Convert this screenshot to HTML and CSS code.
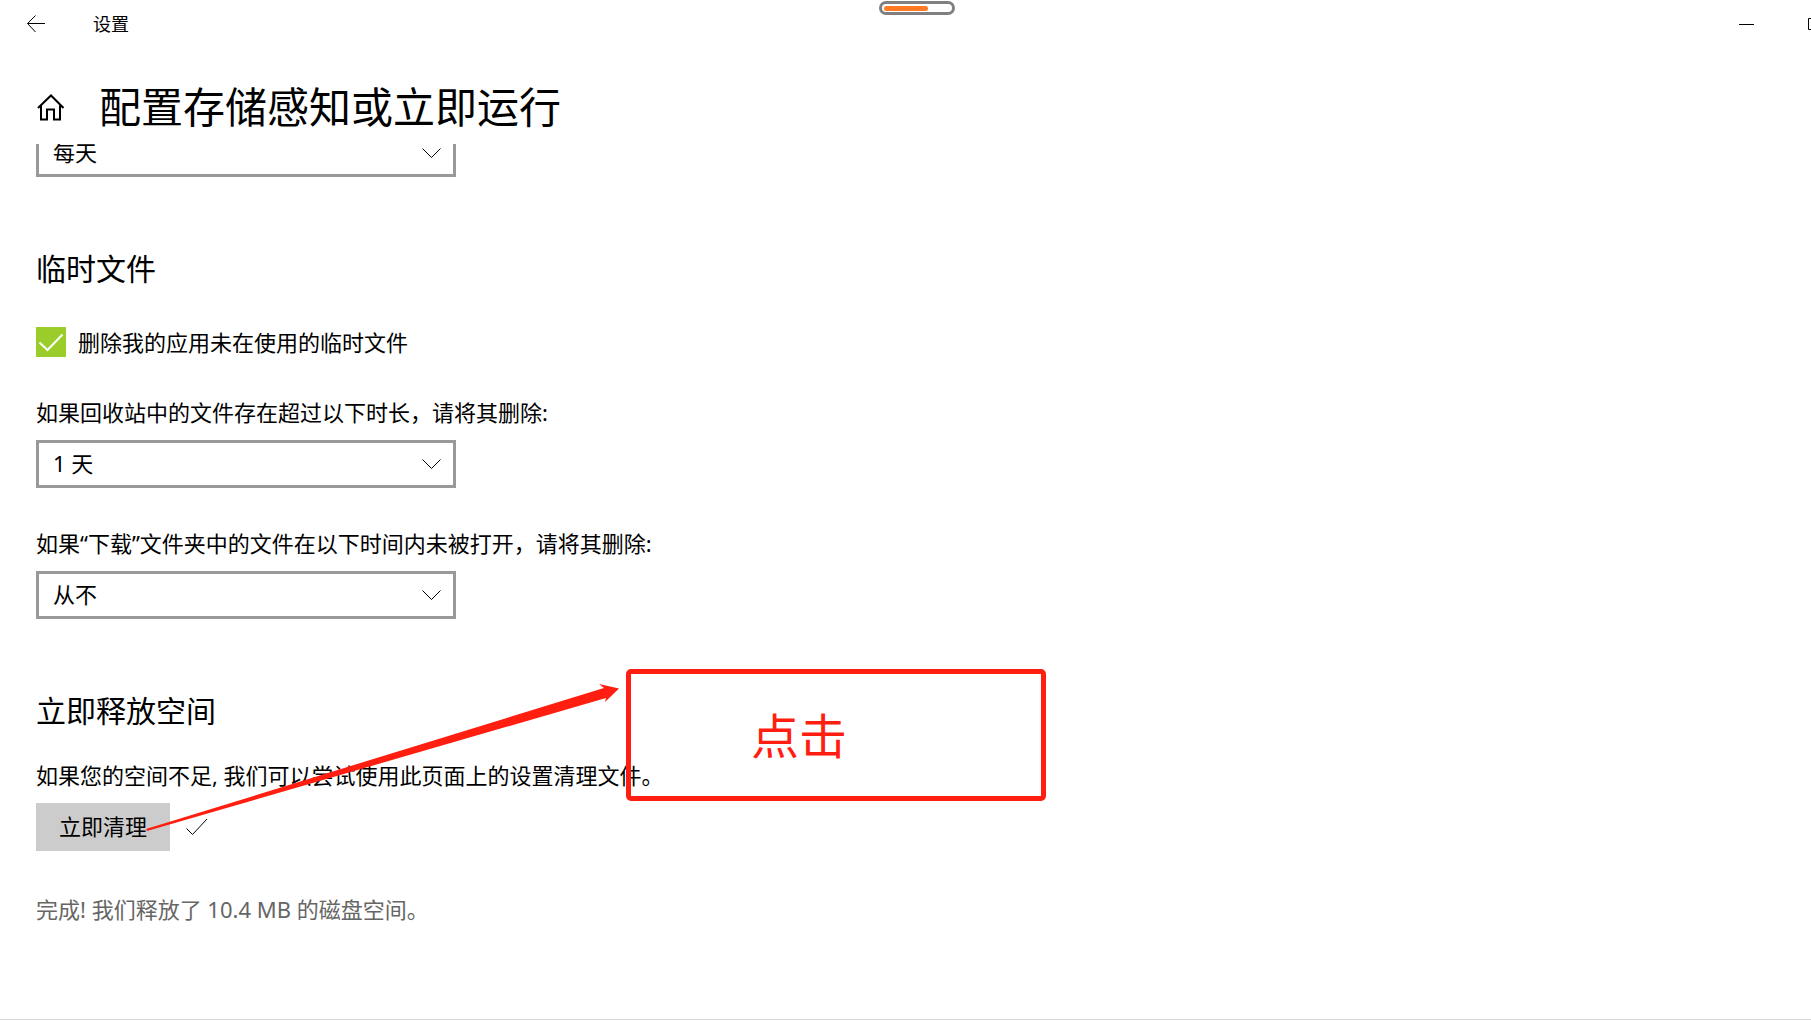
FILE: index.html
```html
<!DOCTYPE html>
<html lang="zh-CN">
<head>
    <meta charset="UTF-8">
    <meta name="viewport" content="width=device-width, initial-scale=1.0">
    <title>设置</title>
    <link rel="stylesheet" href="styles.css">
</head>
<body>
    <header class="titlebar">
        <button type="button" class="back" aria-label="返回">
            <svg width="20" height="18" viewBox="0 0 20 18"><path d="M1.500 8.500H19M9.500 .5L1.500 8.500l8 8.500"/></svg>
        </button>
        <span class="app-name">设置</span>
        <div class="window-buttons">
            <button type="button" aria-label="最小化">
                <svg width="15" height="12" viewBox="0 0 15 12"><path d="M0 6.500H15"/></svg>
            </button>
            <button type="button" aria-label="最大化">
                <svg width="15" height="12" viewBox="0 0 15 12"><path d="M.5 .5h14v11H.5z"/></svg>
            </button>
        </div>
    </header>
    <div class="battery"><div class="battery-level"></div></div>

    <div class="page-head">
        <a href="#" class="home" aria-label="主页">
            <svg width="28" height="27" viewBox="0 0 28 27"><path d="M2 14L15 1.500 27.500 14M5 11.500V25.500h6V15.500h7v10h6V11.500"/></svg>
        </a>
        <h1>配置存储感知或立即运行</h1>
    </div>

    <main class="content">
        <div class="select-box scrolled">
            <select aria-label="运行存储感知">
                <option>每天</option>
            </select>
            <svg class="chevron" width="19" height="11" viewBox="0 0 19 11"><path d="M.5 .5l9 9 9-9"/></svg>
        </div>

        <section>
            <h2>临时文件</h2>
            <label class="check">
                <input type="checkbox" checked>
                <svg class="tick" width="30" height="30" viewBox="0 0 30 30"><path d="M3.500 15.500l8 7.500L26.500 7.500"/></svg>
                删除我的应用未在使用的临时文件
            </label>
            <div class="field">
                <label for="recycle">如果回收站中的文件存在超过以下时长，请将其删除:</label>
                <div class="select-box">
                    <select id="recycle">
                        <option>1 天</option>
                    </select>
                    <svg class="chevron" width="19" height="11" viewBox="0 0 19 11"><path d="M.5 .5l9 9 9-9"/></svg>
                </div>
            </div>
            <div class="field">
                <label for="downloads">如果“下载”文件夹中的文件在以下时间内未被打开，请将其删除:</label>
                <div class="select-box">
                    <select id="downloads">
                        <option>从不</option>
                    </select>
                    <svg class="chevron" width="19" height="11" viewBox="0 0 19 11"><path d="M.5 .5l9 9 9-9"/></svg>
                </div>
            </div>
        </section>

        <section>
            <h2>立即释放空间</h2>
            <p class="hint">如果您的空间不足, 我们可以尝试使用此页面上的设置清理文件。</p>
            <div class="clean-row">
                <button type="button" class="clean">立即清理</button>
                <svg class="done-mark" width="22" height="18" viewBox="0 0 22 18"><path d="M.5 10.500l6 6L21 1"/></svg>
            </div>
            <p class="result">完成! 我们释放了 10.4 MB 的磁盘空间。</p>
        </section>
    </main>

    <!-- click annotation over the page -->
    <svg class="arrow" width="474" height="149" viewBox="0 0 474 149">
        <path d="M0 146L458 5 453 1 473 5.500 459 19 460 15 1 148z"/>
    </svg>
    <div class="callout">点击</div>
</body>
</html>
```
FILE: styles.css
```css
* {
    box-sizing: border-box;
}
body {
    position: relative;
    display: flex;
    flex-direction: column;
    min-height: 100vh;
    margin: 0;
    background: #fff;
    border-bottom: 1px solid #d9d9d9;
    color: #000;
    font-family: "Noto Sans", "Noto Sans CJK SC", sans-serif;
    font-size: 22px;
    line-height: 28px;
}
h1, h2, p {
    margin: 0;
    font-weight: 400;
}
button {
    padding: 0;
    border: none;
    background: none;
    color: inherit;
    font: inherit;
}
svg {
    display: block;
    fill: none;
    stroke: #000;
}
.titlebar {
    display: flex;
    align-items: center;
    height: 48px;
    overflow: hidden;
}
.back {
    display: flex;
    justify-content: center;
    width: 72px;
}
.app-name {
    margin-left: 21px;
    font-size: 18px;
}
.window-buttons {
    display: flex;
    margin-left: auto;
    margin-right: -39px;
}
.window-buttons button {
    display: flex;
    align-items: center;
    justify-content: center;
    width: 69px;
    height: 52px;
}
.battery {
    position: absolute;
    top: 1px;
    left: calc(50% - 27px);
    width: 76px;
    height: 14px;
    padding: 2px;
    border: 3px solid #808080;
    border-radius: 7px;
}
.battery-level {
    width: 44px;
    height: 5px;
    border-radius: 3px;
    background: #ff7a22;
}
.page-head {
    display: flex;
    align-items: center;
    gap: 35px;
    height: 96px;
    padding: 22px 36px 0;
}
.home svg {
    stroke-width: 2;
}
h1 {
    font-size: 42px;
    line-height: 56px;
}
.content {
    flex: 1;
    padding: 0 36px 32px;
    overflow: hidden;
}
/* the list is scrolled, so its first box is cut by the header */
.scrolled {
    margin-top: -15px;
}
.select-box {
    display: grid;
    align-items: center;
    width: 420px;
    max-width: 100%;
}
.select-box select,
.chevron {
    grid-area: 1 / 1;
}
.select-box select {
    width: 100%;
    height: 48px;
    padding: 0 48px 2px 14px;
    border: 3px solid #999;
    border-radius: 0;
    background: #fff;
    color: #000;
    font: inherit;
    appearance: none;
}
.chevron {
    justify-self: end;
    margin-right: 15px;
    pointer-events: none;
}
section {
    padding-top: 72px;
}
h2 {
    font-size: 30px;
    line-height: 40px;
}
.check {
    display: flex;
    align-items: center;
    width: fit-content;
    margin-top: 38px;
}
.check input {
    width: 30px;
    height: 30px;
    margin: 0;
    background: #9acd2a;
    appearance: none;
}
.tick {
    margin-left: -30px;
    margin-right: 12px;
    stroke: #fff;
    stroke-width: 2;
}
.field {
    display: flex;
    flex-direction: column;
    gap: 14px;
    margin-top: 42px;
}
.field label {
    margin-top: -1px;
}
.hint {
    margin-top: 30px;
}
.clean-row {
    display: flex;
    align-items: center;
    gap: 16px;
    margin-top: 14px;
}
.clean {
    height: 48px;
    padding: 0 23px 2px;
    background: #ccc;
}
.done-mark {
    stroke-width: 1;
}
.result {
    margin-top: 44px;
    color: #666;
}
.arrow {
    position: absolute;
    top: 683px;
    left: 146px;
    fill: #ff1e10;
    stroke: none;
}
.callout {
    position: absolute;
    top: 669px;
    left: 626px;
    width: 420px;
    height: 132px;
    padding-left: 120px;
    border: 5px solid #ff1e10;
    border-radius: 5px;
    color: #ff1e10;
    font-size: 48px;
    line-height: 124px;
}
```
